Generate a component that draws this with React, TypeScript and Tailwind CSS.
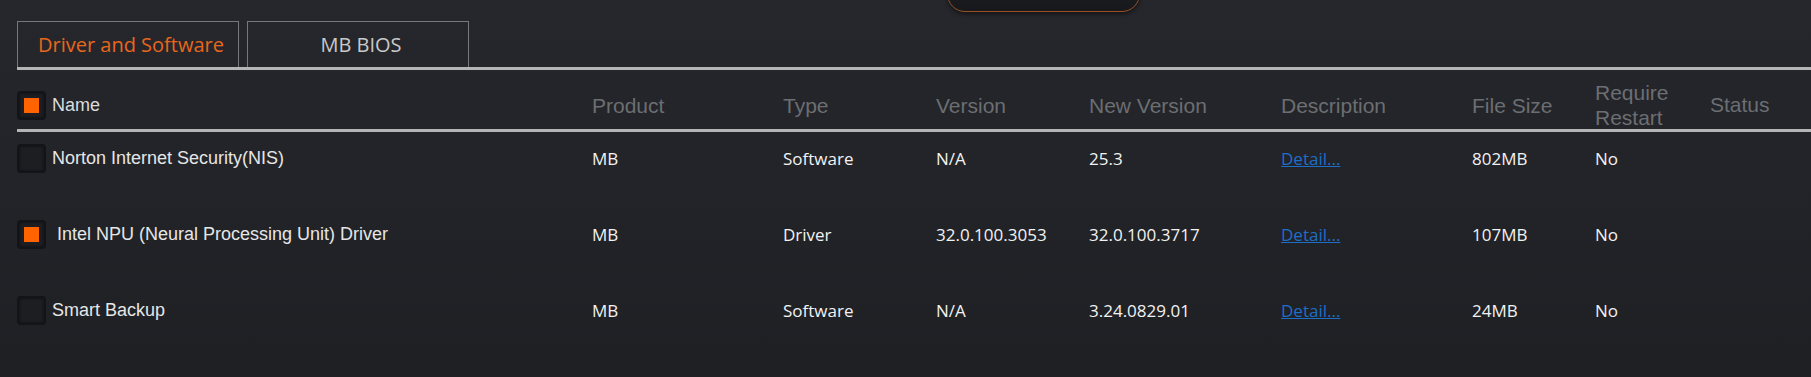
import React from "react";

const cols = [
  { key: "product", label: "Product", w: "w-[191px]" },
  { key: "type", label: "Type", w: "w-[153px]" },
  { key: "version", label: "Version", w: "w-[153px]" },
  { key: "newVersion", label: "New Version", w: "w-[192px]" },
  { key: "desc", label: "Description", w: "w-[191px]" },
  { key: "size", label: "File Size", w: "w-[123px]" },
  { key: "restart", label: "Require Restart", w: "w-[115px]" },
];

const rows = [
  { checked: false, name: "Norton Internet Security(NIS)", product: "MB", type: "Software", version: "N/A", newVersion: "25.3", size: "802MB", restart: "No" },
  { checked: true, name: " Intel NPU (Neural Processing Unit) Driver", product: "MB", type: "Driver", version: "32.0.100.3053", newVersion: "32.0.100.3717", size: "107MB", restart: "No" },
  { checked: false, name: "Smart Backup", product: "MB", type: "Software", version: "N/A", newVersion: "3.24.0829.01", size: "24MB", restart: "No" },
];

function Checkbox({ checked }: { checked: boolean }) {
  return (
    <div className="w-[29px] h-[29px] shrink-0 rounded-[4px] border-2 border-[#121417] bg-[#1c1e22] shadow-[inset_0_0_3px_rgba(0,0,0,0.6)] flex items-center justify-center">
      {checked && <div className="w-[15px] h-[15px] bg-[#ff6400]" />}
    </div>
  );
}

export default function App() {
  const data = "font-['Open_Sans',sans-serif] text-[17px] text-[#f2f2f2]";
  return (
    <div className="relative w-full h-[377px] overflow-hidden bg-gradient-to-b from-[#25272c] to-[#1e2024]">
      <div className="absolute left-[947px] top-[-30px] w-[193px] h-[42px] rounded-b-[18px] border border-[#9a5022] bg-gradient-to-b from-[#202226] to-[#17181b] shadow-[0_2px_4px_rgba(0,0,0,0.5)]" />
      <div className="pt-[21px] pl-[17px]">
        <div className="flex gap-[8px] h-[46px] font-['Open_Sans',sans-serif] text-[20px]">
          <div className="w-[222px] h-full border border-b-0 border-[#75787d] flex items-center justify-center pl-[6px] text-[#e8671c]">
            Driver and Software
          </div>
          <div className="w-[222px] h-full border border-b-0 border-[#75787d] flex items-center justify-center pl-[6px] text-[#c9c9c9]">
            MB BIOS
          </div>
        </div>
        <div className="h-[3px] bg-[#b5b5b5]" />
        <div className="h-[59px] pt-[11px] flex items-center font-['Liberation_Sans',Arial,sans-serif]">
          <div className="w-[575px] flex items-center gap-[6px]">
            <Checkbox checked={true} />
            <span className="text-[18px] text-[#dcdcdc]">Name</span>
          </div>
          {cols.map((c) => (
            <div key={c.key} className={`${c.w} text-[21px] leading-[25px] text-[#6c6e72]`}>
              {c.key === "restart" ? (
                <>
                  Require
                  <br />
                  Restart
                </>
              ) : (
                c.label
              )}
            </div>
          ))}
          <div className="text-[21px] text-[#6c6e72]">Status</div>
        </div>
        <div className="h-[3px] bg-[#b5b5b5]" />
        {rows.map((r, i) => (
          <div key={i} className="h-[76px] pt-[12px] flex items-start">
            <div className="w-[575px] h-[29px] flex items-center gap-[6px]">
              <Checkbox checked={r.checked} />
              <span className="whitespace-pre font-['Liberation_Sans',Arial,sans-serif] text-[18px] text-[#e6e6e6]">
                {r.name}
              </span>
            </div>
            <div className={`w-[191px] h-[29px] flex items-center ${data}`}>{r.product}</div>
            <div className={`w-[153px] h-[29px] flex items-center ${data}`}>{r.type}</div>
            <div className={`w-[153px] h-[29px] flex items-center ${data}`}>{r.version}</div>
            <div className={`w-[192px] h-[29px] flex items-center ${data}`}>{r.newVersion}</div>
            <div className="w-[191px] h-[29px] flex items-center font-['Open_Sans',sans-serif] text-[17px] text-[#1f6ec6] underline">
              Detail...
            </div>
            <div className={`w-[123px] h-[29px] flex items-center ${data}`}>{r.size}</div>
            <div className={`w-[115px] h-[29px] flex items-center ${data}`}>{r.restart}</div>
          </div>
        ))}
      </div>
    </div>
  );
}
